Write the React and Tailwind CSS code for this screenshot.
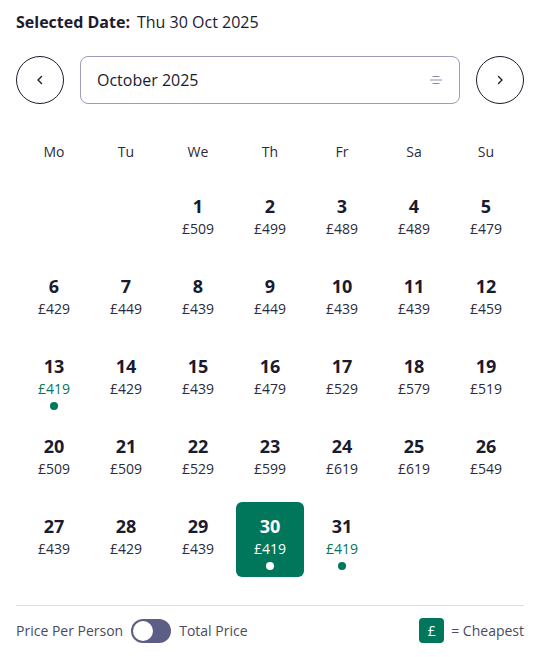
import React from "react";

const days = [
  null, null,
  [1, 509], [2, 499], [3, 489], [4, 489], [5, 479],
  [6, 429], [7, 449], [8, 439], [9, 449], [10, 439], [11, 439], [12, 459],
  [13, 419], [14, 429], [15, 439], [16, 479], [17, 529], [18, 579], [19, 519],
  [20, 509], [21, 509], [22, 529], [23, 599], [24, 619], [25, 619], [26, 549],
  [27, 439], [28, 429], [29, 439], [30, 419], [31, 419],
];

const week = ["Mo", "Tu", "We", "Th", "Fr", "Sa", "Su"];

function Cell({ d }) {
  if (!d) return <div className="h-[75px]" />;
  const [n, p] = d;
  const cheap = p === 419;
  const sel = n === 30;
  return (
    <div
      className={`mx-[2px] h-[75px] rounded-md flex flex-col items-center pt-3 ${
        sel ? "bg-[#00775b] text-white" : "text-[#1b1b2f]"
      }`}
    >
      <div className="text-[18px] leading-6 font-bold">{n}</div>
      <div
        className={`mt-px text-[14px] leading-5 ${
          sel ? "text-white" : cheap ? "text-[#00775b]" : "text-[#2b2b3a]"
        }`}
      >
        £{p}
      </div>
      {cheap && (
        <div
          className={`mt-[3px] w-2 h-2 rounded-full ${
            sel ? "bg-white" : "bg-[#00775b]"
          }`}
        />
      )}
    </div>
  );
}

export default function App() {
  return (
    <div
      className="w-[537px] h-[657px] bg-white pl-4 pr-[13px] pt-[10px]"
      style={{ fontFamily: '"Open Sans", sans-serif' }}
    >
      <div className="text-[16px] leading-6 text-[#1b1b2f]">
        <span className="font-bold">Selected Date:</span>
        <span className="ml-[7px]">Thu 30 Oct 2025</span>
      </div>

      <div className="mt-[22px] flex items-center gap-4">
        <button className="w-12 h-12 rounded-full border border-[#1b1b2f] flex items-center justify-center shrink-0">
          <svg width="12" height="12" viewBox="0 0 12 12" fill="none">
            <path d="M7.5 2.5 4 6l3.5 3.5" stroke="#1b1b2f" strokeWidth="1.4" strokeLinecap="round" strokeLinejoin="round" />
          </svg>
        </button>
        <div className="flex-1 h-12 rounded-lg border border-[#9d9cb9] flex items-center justify-between pl-4 pr-4">
          <span className="text-[16px] text-[#1b1b2f]">October 2025</span>
          <svg width="14" height="14" viewBox="0 0 14 14" fill="none">
            <path d="M4 3.5h6M1.5 7h11M4 10.5h6" stroke="#8d8ca3" strokeWidth="1.2" strokeLinecap="round" />
          </svg>
        </div>
        <button className="w-12 h-12 rounded-full border border-[#1b1b2f] flex items-center justify-center shrink-0">
          <svg width="12" height="12" viewBox="0 0 12 12" fill="none">
            <path d="M4.5 2.5 8 6l-3.5 3.5" stroke="#1b1b2f" strokeWidth="1.4" strokeLinecap="round" strokeLinejoin="round" />
          </svg>
        </button>
      </div>

      <div className="ml-[2px] w-[504px]">
        <div className="mt-[38px] grid grid-cols-7">
          {week.map((w) => (
            <div key={w} className="text-center text-[14px] leading-5 text-[#2b2b3a]">
              {w}
            </div>
          ))}
        </div>
        <div className="mt-5 grid grid-cols-7 gap-y-[5px]">
          {days.map((d, i) => (
            <Cell key={i} d={d} />
          ))}
        </div>
      </div>

      <div className="mt-[28px] border-t border-[#dcdbe6]" />
      <div className="mt-[12px] flex items-center justify-between text-[14px] text-[#4b4a5e]">
        <div className="flex items-center">
          <span>Price Per Person</span>
          <div className="ml-2 w-10 h-6 rounded-full bg-[#5d5e85] p-[2px] flex items-center">
            <div className="w-5 h-5 rounded-full bg-white" />
          </div>
          <span className="ml-2">Total Price</span>
        </div>
        <div className="flex items-center">
          <div className="w-[25px] h-[25px] rounded bg-[#00775b] text-white flex items-center justify-center text-[14px]">
            £
          </div>
          <span className="ml-[7px]">= Cheapest</span>
        </div>
      </div>
    </div>
  );
}
